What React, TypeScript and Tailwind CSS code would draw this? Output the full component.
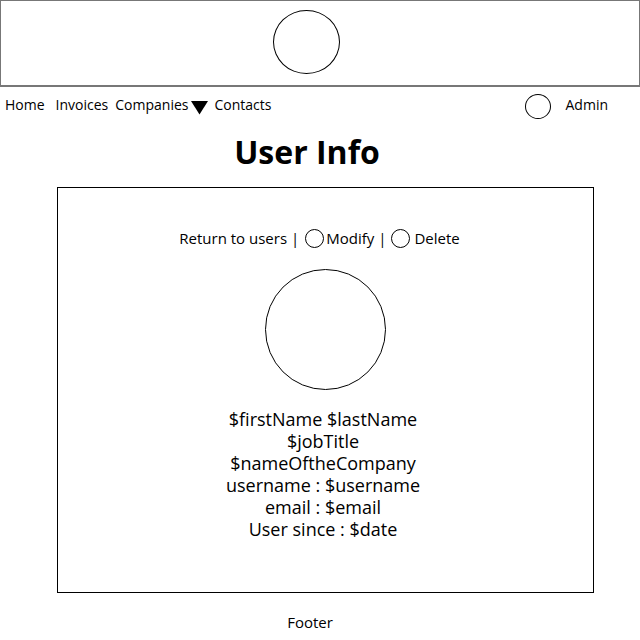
import React from "react";

function Avatar({ className }: { className: string }) {
  return <span aria-hidden="true" className={"block shrink-0 rounded-[50%] border border-black bg-white " + className} />;
}

const details = ["$firstName $lastName", "$jobTitle", "$nameOftheCompany", "username : $username", "email : $email", "User since : $date"];

export default function App() {
  return (
    <div className="flex min-h-screen flex-col bg-white font-['Open_Sans',sans-serif] text-sm text-black">
      <header className="flex h-[87px] justify-center border border-b-2 border-[#777] pt-[9px] pr-[27px]">
        <Avatar className="h-16 w-[67px]" />
      </header>
      <nav className="flex h-9 items-center justify-between pr-8 pl-[5px]">
        <div className="flex items-center">
          <a href="#home" className="mr-[11px]">Home</a>
          <a href="#invoices" className="mr-[7px]">Invoices</a>
          <button type="button" className="mr-[6px] flex items-center gap-[3px]">
            Companies
            <svg width="17" height="14" viewBox="0 0 17 14" className="mt-[6px]" aria-hidden="true">
              <path d="M0 0h17L8.500 13.500z" />
            </svg>
          </button>
          <a href="#contacts">Contacts</a>
        </div>
        <a href="#admin" className="flex items-center gap-[15px]">
          <Avatar className="mt-[2px] h-[25px] w-[26px]" />
          Admin
        </a>
      </nav>
      <h1 className="mt-1 pr-[26px] text-center text-[32px] leading-[50px] font-bold">User Info</h1>
      <main className="mt-[10px] mr-[46px] ml-[57px] flex h-[406px] flex-col items-center border border-black pt-10">
        <div className="flex items-center pr-3 text-[15px] leading-5">
          <a href="#users">Return to users |</a>
          <button type="button" className="ml-[6px] flex items-center gap-[2px]">
            <Avatar className="size-[19px]" />
            Modify |
          </button>
          <button type="button" className="ml-[5px] flex items-center gap-1">
            <Avatar className="size-[19px]" />
            Delete
          </button>
        </div>
        <Avatar className="mt-[21px] size-[121px]" />
        <div className="mt-[18px] pr-[5px] text-center text-lg leading-[22px]">
          {details.map((line) => <p key={line}>{line}</p>)}
        </div>
      </main>
      <footer className="mt-[19px] pr-5 text-center text-[15px] leading-5">Footer</footer>
    </div>
  );
}
